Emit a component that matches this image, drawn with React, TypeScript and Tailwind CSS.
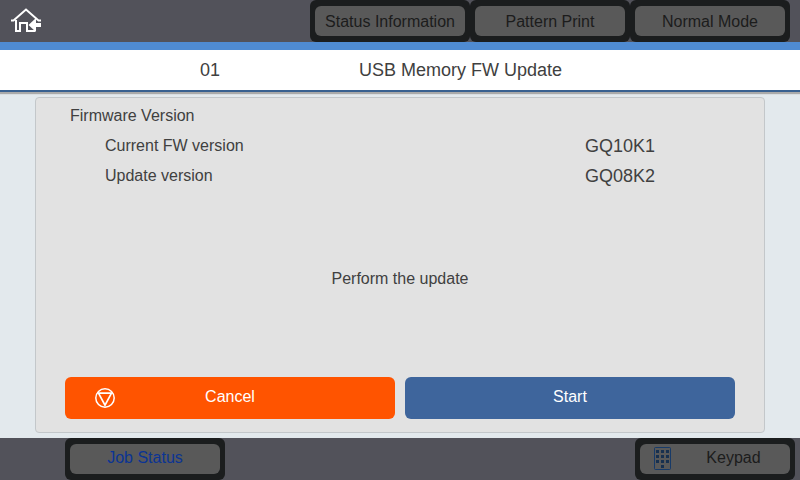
import type { ReactNode } from "react";

function HomeIcon() {
  return (
    <svg width="34" height="28" viewBox="0 0 34 28" fill="none" aria-hidden="true">
      <path d="M1 12.500H3.500L16 1.500L28.500 12.500H31" stroke="#fff" strokeWidth="2" />
      <path d="M6 12V23h4V15h7v8h8" stroke="#fff" strokeWidth="2" />
      <path d="M18.500 17L26 10v5h5v4h-5v5z" fill="#fff" />
    </svg>
  );
}

function StopIcon() {
  return (
    <svg width="20" height="20" viewBox="0 0 20 20" fill="none" stroke="#fff" aria-hidden="true">
      <circle cx="10" cy="10" r="9.200" strokeWidth="1.500" />
      <path d="M3.500 5.200h13L10 17.200z" strokeWidth="1.700" />
    </svg>
  );
}

function KeypadIcon() {
  return (
    <svg width="17" height="23" viewBox="0 0 17 23" fill="none" aria-hidden="true">
      <rect x="0.500" y="0.500" width="16" height="22" rx="1" stroke="#173a68" />
      <path
        d="M2 3h3v3H2zM7 3h3v3H7zM12 3h3v3h-3zM2 8h3v3H2zM7 8h3v3H7zM12 8h3v3h-3zM2 13h3v3H2zM7 13h3v3H7zM12 13h3v3h-3zM7 18h3v3H7z"
        fill="#17304f"
      />
    </svg>
  );
}

function BarButton({ children, className = "pt-0.5 text-[#1c1c1c]" }: { children: ReactNode; className?: string }) {
  return (
    <div className="h-[42px] w-40 rounded-md bg-[#1b1d1e] px-[5px] py-1.5">
      <button type="button" className={`flex h-full w-full items-center justify-center rounded-md bg-[#595959] ${className}`}>
        {children}
      </button>
    </div>
  );
}

function VersionRow({ label, value }: { label: string; value: string }) {
  return (
    <div className="flex pl-[69px]">
      <dt className="flex-1">{label}</dt>
      <dd className="w-[179px] text-lg/[30px]">{value}</dd>
    </div>
  );
}

export default function App() {
  return (
    <div className="flex min-h-screen flex-col bg-[#e3e9ed] font-['Liberation_Sans',Arial,sans-serif] text-base text-[#404040]">
      <header className="flex justify-between border-b-8 border-[#4f8bd2] bg-[#52525a] px-2.5">
        <button type="button" aria-label="Home" className="pt-0.5">
          <HomeIcon />
        </button>
        <nav className="flex">
          <BarButton>Status Information</BarButton>
          <BarButton>Pattern Print</BarButton>
          <BarButton>Normal Mode</BarButton>
        </nav>
      </header>

      <div className="grid h-[42px] grid-cols-4 items-center border-b-2 border-[#386090] bg-white text-lg shadow-[0_2px_1px_#aaaaaa]">
        <span className="col-start-2">01</span>
        <h1 className="col-span-2 -ml-[41px]">USB Memory FW Update</h1>
      </div>

      <main className="mx-[35px] my-[5px] flex flex-1 flex-col rounded-sm border border-[#c3c7ca] bg-[#e2e2e2] pt-[3px] pb-[13px]">
        <h2 className="pl-[34px] leading-[30px]">Firmware Version</h2>
        <dl className="leading-[30px]">
          <VersionRow label="Current FW version" value="GQ10K1" />
          <VersionRow label="Update version" value="GQ08K2" />
        </dl>
        <p className="flex flex-1 items-center justify-center pb-2.5">Perform the update</p>
        <div className="grid grid-cols-2 gap-2.5 px-[29px] text-white">
          <button type="button" className="grid h-[42px] grid-cols-[1fr_auto_1fr] items-center rounded-md bg-[#ff5400] px-[30px]">
            <StopIcon />
            <span className="pb-0.5">Cancel</span>
          </button>
          <button type="button" className="h-[42px] rounded-md bg-[#3e659c] pb-0.5">
            Start
          </button>
        </div>
      </main>

      <footer className="flex justify-between bg-[#52525a] pr-[5px] pl-[65px]">
        <BarButton className="pb-0.5 text-[#0b3494]">Job Status</BarButton>
        <BarButton className="pl-3.5 text-[#1c1c1c]">
          <span className="pb-0.5">
            <KeypadIcon />
          </span>
          <span className="flex-1 pb-0.5 pl-1.5">Keypad</span>
        </BarButton>
      </footer>
    </div>
  );
}
